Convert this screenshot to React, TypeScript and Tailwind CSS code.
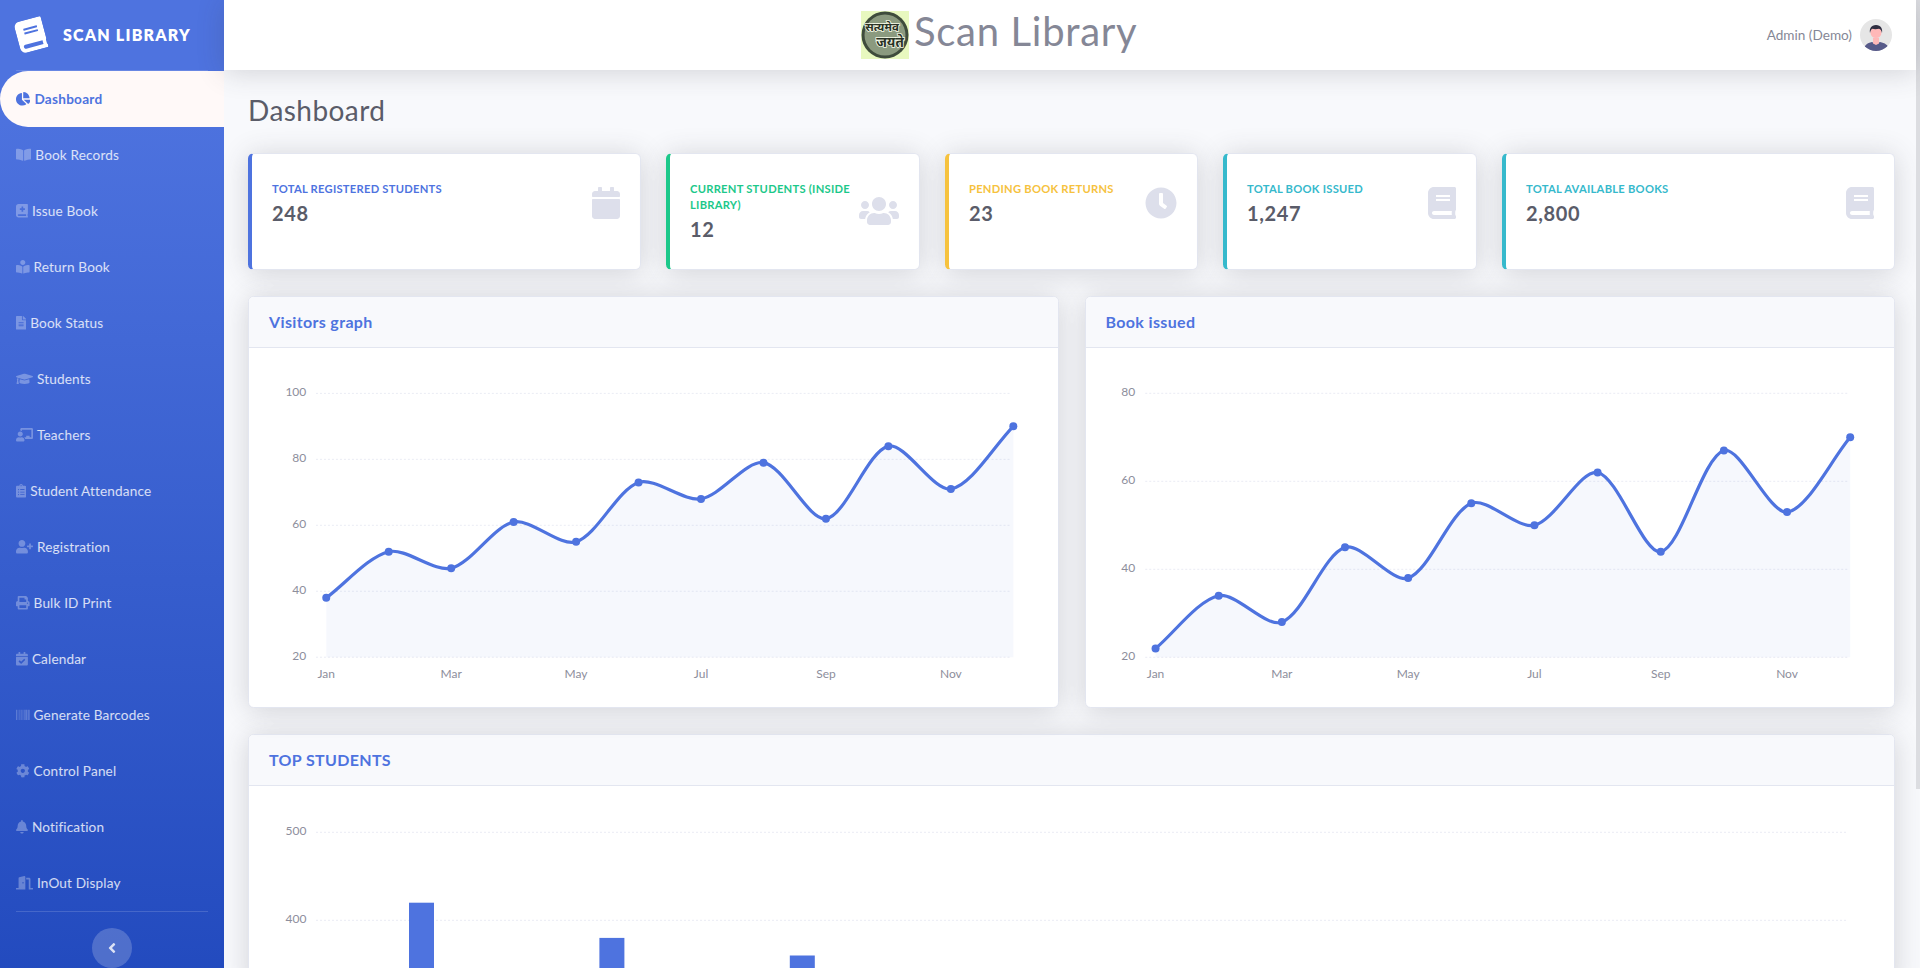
import React from "react";
import {
  FaChartPie, FaBookOpen, FaBookMedical, FaBookReader, FaFileAlt, FaGraduationCap,
  FaChalkboardTeacher, FaClipboardList, FaUserPlus, FaPrint, FaCalendarCheck, FaBarcode,
  FaCog, FaBell, FaDoorOpen, FaBook, FaAngleLeft, FaCalendar, FaUsers, FaClock,
} from "react-icons/fa";

const NAV = [
  { label: "Dashboard", icon: FaChartPie, w: "w-[14.45px]", active: true },
  { label: "Book Records", icon: FaBookOpen, w: "w-[15.3px]" },
  { label: "Issue Book", icon: FaBookMedical, w: "w-[11.9px]" },
  { label: "Return Book", icon: FaBookReader, w: "w-[13.6px]" },
  { label: "Book Status", icon: FaFileAlt, w: "w-[10.2px]" },
  { label: "Students", icon: FaGraduationCap, w: "w-[17px]" },
  { label: "Teachers", icon: FaChalkboardTeacher, w: "w-[17px]" },
  { label: "Student Attendance", icon: FaClipboardList, w: "w-[10.2px]" },
  { label: "Registration", icon: FaUserPlus, w: "w-[17px]" },
  { label: "Bulk ID Print", icon: FaPrint, w: "w-[13.6px]" },
  { label: "Calendar", icon: FaCalendarCheck, w: "w-[11.9px]" },
  { label: "Generate Barcodes", icon: FaBarcode, w: "w-[13.6px]" },
  { label: "Control Panel", icon: FaCog, w: "w-[13.6px]" },
  { label: "Notification", icon: FaBell, w: "w-[11.9px]" },
  { label: "InOut Display", icon: FaDoorOpen, w: "w-[17px]" },
];

const MONTHS = ["Jan", "Mar", "May", "Jul", "Sep", "Nov"];

function Sidebar() {
  return (
    <aside className="w-56 shrink-0 pb-4 bg-gradient-to-b from-[#4e73df] from-10% to-[#224abe]">
      <div className="h-[70px] flex items-center pl-[17px]">
        <FaBook className="h-8 w-7 -rotate-[15deg] text-white shrink-0" />
        <span className="ml-[18px] text-white text-[16px] font-extrabold tracking-[1.2px] uppercase">Scan Library</span>
      </div>
      <div className="mx-4 border-t border-white/15" />
      <nav className="flex flex-col">
        {NAV.map((n) => {
          const Icon = n.icon;
          return n.active ? (
            <a key={n.label} className="h-14 flex items-center pl-4 bg-[#fff9f8] rounded-l-[28px] text-[#4e73df] text-[13.6px] font-bold tracking-[0.25px]">
              <Icon className={`h-[13.6px] ${n.w} shrink-0 mr-1`} />
              {n.label}
            </a>
          ) : (
            <a key={n.label} className="h-14 flex items-center pl-4 text-white/80 text-[13.6px] tracking-[0.15px]">
              <Icon className={`h-[13.6px] ${n.w} shrink-0 mr-1 text-white/30`} />
              {n.label}
            </a>
          );
        })}
      </nav>
      <div className="mx-4 border-t border-white/15" />
      <div className="flex justify-center mt-4">
        <button className="w-10 h-10 rounded-full bg-white/20 flex items-center justify-center">
          <FaAngleLeft className="h-4 w-2 text-white/80" />
        </button>
      </div>
    </aside>
  );
}

function Logo() {
  return (
    <svg viewBox="0 0 48 48" className="w-12 h-12 shrink-0">
      <rect width="48" height="48" fill="#e8f8bf" />
      <circle cx="24" cy="24" r="23.500" fill="#3f4c3c" />
      <circle cx="24" cy="24" r="20.500" fill="#8b9a7f" />
      <g fontWeight="700" fill="#2a3326" stroke="#f6fae8" strokeWidth="1.6" paintOrder="stroke" fontFamily="'Noto Sans',sans-serif">
        <text x="21" y="20" fontSize="11.500" textAnchor="middle">सत्यमेव</text>
        <text x="29" y="36" fontSize="13.500" textAnchor="middle">जयते</text>
      </g>
    </svg>
  );
}

function Avatar() {
  return (
    <svg viewBox="0 0 32 32" className="w-8 h-8 shrink-0">
      <defs>
        <clipPath id="av"><circle cx="16" cy="16" r="16" /></clipPath>
      </defs>
      <g clipPath="url(#av)">
        <rect width="32" height="32" fill="#e6e6e6" />
        <path d="M4 32c0-6 3-8 8-9l4 2 4-2c5 1 8 3 9 7v2z" fill="#575a89" />
        <path d="M13 19h6v5.5l-3 1.5-3-1.500z" fill="#ffb8b8" />
        <circle cx="16" cy="13.500" r="5.500" fill="#ffb8b8" />
        <path d="M10 14c-.8-4 1-8 6-8 5 0 6.800 4 6 8-.6-2.500-1.500-3.800-3-4.200-2.500.6-5 .6-6.500 0-1.500.6-2 2-2.500 4.200z" fill="#2f2e41" />
      </g>
    </svg>
  );
}

function Topbar() {
  return (
    <header className="h-[70px] shrink-0 bg-white flex items-center justify-between pl-[637px] pr-[24px] shadow-[0_2.4px_28px_0_rgba(58,59,69,0.2)] relative z-10">
      <div className="flex items-center">
        <Logo />
        <span className="ml-[5px] text-[40px] leading-[48px] tracking-[0.7px] text-[#858796] -mt-[8px]">Scan Library</span>
      </div>
      <div className="flex items-center">
        <span className="text-[13.6px] text-[#858796] mr-2">Admin (Demo)</span>
        <Avatar />
      </div>
    </header>
  );
}

type Stat = { title: React.ReactNode; value: string; border: string; color: string; w: string; Icon: React.ComponentType<{ className?: string }> };

const STATS: Stat[] = [
  { title: "Total Registered Students", value: "248", border: "border-l-[#4e73df]", color: "text-[#4e73df]", w: "w-7", Icon: FaCalendar },
  { title: <>Current Students (Inside<br />Library)</>, value: "12", border: "border-l-[#1cc88a]", color: "text-[#1cc88a]", w: "w-10", Icon: FaUsers },
  { title: "Pending Book Returns", value: "23", border: "border-l-[#f6c23e]", color: "text-[#f6c23e]", w: "w-8", Icon: FaClock },
  { title: "Total Book Issued", value: "1,247", border: "border-l-[#36b9cc]", color: "text-[#36b9cc]", w: "w-7", Icon: FaBook },
  { title: "Total Available Books", value: "2,800", border: "border-l-[#36b9cc]", color: "text-[#36b9cc]", w: "w-7", Icon: FaBook },
];

function StatCard({ s }: { s: Stat }) {
  const { Icon } = s;
  return (
    <div className={`bg-white rounded-[5.6px] border border-[#e3e6f0] border-l-4 ${s.border} shadow-[0_2.4px_28px_0_rgba(58,59,69,0.2)] pt-[27px] pb-[28px] px-5`}>
      <div className="flex items-center justify-between">
        <div className="min-w-0 mr-2">
          <div className={`text-[11.2px] leading-4 font-bold uppercase tracking-[0.25px] whitespace-nowrap ${s.color}`}>{s.title}</div>
          <div className="text-[20px] leading-6 font-bold tracking-[0.6px] text-[#5a5c69] mt-1">{s.value}</div>
        </div>
        <Icon className={`h-8 ${s.w} shrink-0 text-[#dddfeb]`} />
      </div>
    </div>
  );
}

function spline(pts: [number, number][], t = 0.3) {
  const ctrl = pts.map((p, i) => {
    const prev = pts[i - 1] ?? p;
    const next = pts[i + 1] ?? p;
    const d01 = Math.hypot(p[0] - prev[0], p[1] - prev[1]);
    const d12 = Math.hypot(next[0] - p[0], next[1] - p[1]);
    const sum = d01 + d12 || 1;
    const fa = (t * d01) / sum;
    const fb = (t * d12) / sum;
    return {
      inX: p[0] - fa * (next[0] - prev[0]),
      inY: p[1] - fa * (next[1] - prev[1]),
      outX: p[0] + fb * (next[0] - prev[0]),
      outY: p[1] + fb * (next[1] - prev[1]),
    };
  });
  let d = `M${pts[0][0]} ${pts[0][1]}`;
  for (let i = 1; i < pts.length; i++) {
    d += ` C${ctrl[i - 1].outX} ${ctrl[i - 1].outY} ${ctrl[i].inX} ${ctrl[i].inY} ${pts[i][0]} ${pts[i][1]}`;
  }
  return d;
}

type LineProps = { left: number; width: number; values: number[]; x0: number; step: number; max: number; ticks: number[]; gridA: number; gridB: number; labelX: number };

function LineChart({ left, width, values, x0, step, max, ticks, gridA, gridB, labelX }: LineProps) {
  const top = 348;
  const toY = (v: number) => 657.3 - ((v - 20) * 264) / (max - 20);
  const pts = values.map((v, i) => [x0 + i * step, toY(v)] as [number, number]);
  const line = spline(pts);
  const last = pts[pts.length - 1];
  return (
    <svg viewBox={`${left} ${top} ${width} 359`} className="block w-full h-[359px]">
      {ticks.map((t) => (
        <g key={t}>
          <line x1={gridA} x2={gridB} y1={toY(t)} y2={toY(t)} stroke="#eaecf4" strokeDasharray="2 2" />
          <text x={labelX} y={toY(t) + 2.5} textAnchor="end" fontSize="12" fill="#8d8e9c">{t}</text>
        </g>
      ))}
      <path d={`${line} L${last[0]} 657.3 L${pts[0][0]} 657.3 Z`} fill="rgba(78,115,223,0.05)" />
      <path d={line} fill="none" stroke="#4e73df" strokeWidth="3.2" />
      {pts.map((p, i) => (
        <circle key={i} cx={p[0]} cy={p[1]} r="4" fill="#4e73df" />
      ))}
      {MONTHS.map((m, i) => (
        <text key={m} x={x0 + i * 2 * step} y="678" textAnchor="middle" fontSize="12" fill="#8d8e9c">{m}</text>
      ))}
    </svg>
  );
}

function BarChart() {
  const bars = [420, 380, 360];
  const toY = (v: number) => 920.3 + ((400 - v) * 88) / 100;
  return (
    <svg viewBox="249 786 1645 200" className="block w-full h-[200px]">
      {[500, 400].map((t) => (
        <g key={t}>
          <line x1="316" x2="1848" y1={toY(t)} y2={toY(t)} stroke="#eaecf4" strokeDasharray="2 2" />
          <text x="306.500" y={toY(t) + 2.5} textAnchor="end" fontSize="12" fill="#8d8e9c">{t}</text>
        </g>
      ))}
      {bars.map((b, i) => (
        <rect key={i} x={409 + i * 190.4} y={toY(b)} width="25" height={986 - toY(b)} fill="#4e73df" />
      ))}
    </svg>
  );
}

function Panel({ title, children }: { title: string; children: React.ReactNode }) {
  return (
    <div className="bg-white rounded-[5.6px] border border-[#e3e6f0] shadow-[0_2.4px_28px_0_rgba(58,59,69,0.2)] overflow-hidden">
      <div className="h-[51px] bg-[#f8f9fc] border-b border-[#e3e6f0] flex items-center pl-5">
        <h6 className="text-[16px] font-bold tracking-[0.35px] text-[#4e73df]">{title}</h6>
      </div>
      {children}
    </div>
  );
}

export default function App() {
  return (
    <div className="h-screen flex items-start overflow-hidden bg-[#f8f9fc] text-[#858796] [font-family:Lato,'Noto_Sans',sans-serif]">
      <Sidebar />
      <div className="flex-1 min-w-0 h-screen flex flex-col">
        <Topbar />
        <main className="pt-[23px] pl-6 pr-[21px]">
          <h1 className="text-[28px] leading-[34px] tracking-[0.45px] text-[#5a5c69] mb-[26px]">Dashboard</h1>
          <div className="grid grid-cols-[393px_254px_253px_254px_393px] gap-[25px] mb-[26px]">
            {STATS.map((s, i) => (
              <StatCard key={i} s={s} />
            ))}
          </div>
          <div className="grid grid-cols-2 gap-[26px] mb-[26px]">
            <Panel title="Visitors graph">
              <LineChart left={249} width={809} values={[38, 52, 47, 61, 55, 73, 68, 79, 62, 84, 71, 90]} x0={326.3} step={62.5} max={100} ticks={[100, 80, 60, 40, 20]} gridA={316} gridB={1012} labelX={306.3} />
            </Panel>
            <Panel title="Book issued">
              <LineChart left={1086} width={808} values={[22, 34, 28, 45, 38, 55, 50, 62, 44, 67, 53, 70]} x0={1155.3} step={63.15} max={80} ticks={[80, 60, 40, 20]} gridA={1145} gridB={1849} labelX={1135} />
            </Panel>
          </div>
          <Panel title="TOP STUDENTS">
            <BarChart />
          </Panel>
        </main>
      </div>
      <div className="w-1 h-[789px] shrink-0 bg-[#dcdde1]" />
    </div>
  );
}
